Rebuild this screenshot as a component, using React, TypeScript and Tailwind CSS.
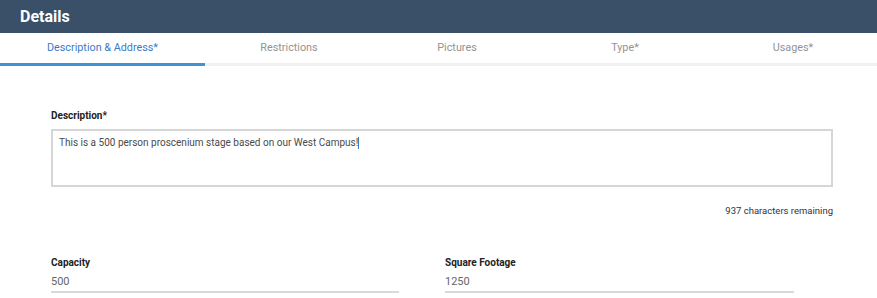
import React from "react";

export default function App() {
  const tabs = ["Restrictions", "Pictures", "Type*", "Usages*"];
  return (
    <div className="w-[877px] h-[298px] bg-white overflow-hidden" style={{ fontFamily: "Roboto, 'Liberation Sans', sans-serif" }}>
      <div className="h-[33px] bg-[#3a5069] flex items-center pl-[20px]">
        <span className="text-white font-bold text-[16px]">Details</span>
      </div>
      <div className="flex h-[33px] border-b-[3px] border-[#f1f1f1]">
        <div className="w-[205px] flex items-center justify-center text-[10.8px] text-[#3a7bc8] border-b-[3px] border-[#3f94d4] -mb-[3px]">
          Description &amp; Address*
        </div>
        {tabs.map((t) => (
          <div key={t} className="flex-1 flex items-center justify-center text-[10.8px] text-[#939393]">
            {t}
          </div>
        ))}
      </div>
      <div className="pl-[51px] pr-[44px] pt-[43px]">
        <div className="text-[10px] font-bold text-[#222] leading-[14px]">Description*</div>
        <div className="mt-[6px] h-[58px] border-2 border-[#d6d6d6] px-[6px] pt-[5px] text-[10px] leading-[14px] text-[#4a4a4a]">
          This is a 500 person proscenium stage based on our West Campus!<span className="inline-block w-px h-[12px] bg-[#3a7bc8] align-middle"></span>
        </div>
        <div className="mt-[17px] text-right text-[9.5px] text-[#333]">937 characters remaining</div>
        <div className="mt-[38px] flex gap-[46px]">
          <div className="w-[348px]">
            <div className="text-[10px] font-bold text-[#222] leading-[14px]">Capacity</div>
            <div className="mt-[5px] text-[11px] text-[#666] leading-[14px]">500</div>
            <div className="mt-[2px] h-[2px] bg-[#d9d9d9]"></div>
          </div>
          <div className="w-[349px]">
            <div className="text-[10px] font-bold text-[#222] leading-[14px]">Square Footage</div>
            <div className="mt-[5px] text-[11px] text-[#666] leading-[14px]">1250</div>
            <div className="mt-[2px] h-[2px] bg-[#d9d9d9]"></div>
          </div>
        </div>
      </div>
    </div>
  );
}
